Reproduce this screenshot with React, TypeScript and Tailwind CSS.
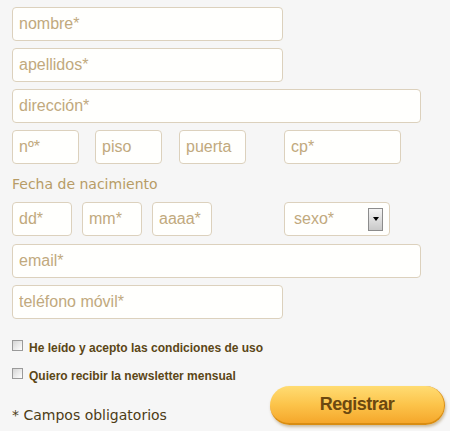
import React from 'react';

const inputCls =
  'block h-[34px] rounded-[4px] border border-[#dcd1bd] bg-[#fffffd] px-[6px] text-[16px] text-[#7a6848] outline-none placeholder:text-[#c1a97e]';

function Field({ placeholder, className }: { placeholder: string; className: string }) {
  return <input type="text" placeholder={placeholder} className={`${inputCls} ${className}`} />;
}

function Check({ label }: { label: string }) {
  return (
    <label className="flex items-start gap-[6px] text-[12px] font-bold leading-[14px] text-[#5b4617]">
      <span className="block h-[11px] w-[11px] shrink-0 border border-[#9a9a9a] bg-gradient-to-br from-[#d5d5d5] to-[#ffffff]" />
      <span className="mt-[1px]">{label}</span>
    </label>
  );
}

export default function App() {
  return (
    <div
      className="min-h-screen bg-[#f6f6f6] pl-3 pt-[7px]"
      style={{ fontFamily: '"Liberation Sans", Arial, sans-serif' }}
    >
      <div className="flex flex-col gap-[7px]">
        <Field placeholder="nombre*" className="w-[271px]" />
        <Field placeholder="apellidos*" className="w-[271px]" />
        <Field placeholder="dirección*" className="w-[409px]" />
        <div className="flex">
          <Field placeholder="nº*" className="w-[67px]" />
          <Field placeholder="piso" className="ml-[16px] w-[67px]" />
          <Field placeholder="puerta" className="ml-[17px] w-[67px]" />
          <Field placeholder="cp*" className="ml-[38px] w-[117px]" />
        </div>
      </div>

      <div className="mt-[11px] h-[27px] font-['DejaVu_Sans',sans-serif] text-[14px] leading-[18px] text-[#b79c66]">
        Fecha de nacimiento
      </div>

      <div className="flex items-center">
        <Field placeholder="dd*" className="h-[32px] w-[60px]" />
        <Field placeholder="mm*" className="ml-[10px] h-[32px] w-[60px]" />
        <Field placeholder="aaaa*" className="ml-[10px] h-[32px] w-[60px]" />
        <div className="ml-[72px] flex h-[34px] w-[106px] items-center justify-between rounded-[4px] border border-[#dcd1bd] bg-[#fffffd] pl-[9px] pr-[6px] text-[16px] text-[#c1a97e]">
          <span>sexo*</span>
          <span className="flex h-[23px] w-[15px] items-center justify-center border border-[#8c8c8c] bg-gradient-to-b from-[#f4f4f4] to-[#c9c9c9]">
            <span className="block h-0 w-0 border-x-[3px] border-t-[4px] border-x-transparent border-t-black" />
          </span>
        </div>
      </div>

      <div className="mt-[8px] flex flex-col gap-[7px]">
        <Field placeholder="email*" className="w-[409px]" />
        <Field placeholder="teléfono móvil*" className="w-[271px]" />
      </div>

      <div className="mt-[21px] flex flex-col gap-[13px]">
        <Check label="He leído y acepto las condiciones de uso" />
        <Check label="Quiero recibir la newsletter mensual" />
      </div>

      <div className="mt-[3px] flex items-end">
        <div className="mb-[1px] font-['DejaVu_Sans',sans-serif] text-[14px] leading-[17px] text-[#4d3c17]">
          * Campos obligatorios
        </div>
        <button className="ml-auto mr-[5px] h-[39px] w-[175px] rounded-full border-b-2 border-r border-[#d98d12] bg-gradient-to-b from-[#ffdc72] via-[#fcc44a] to-[#f5a72a] text-[18px] font-bold tracking-[-0.5px] text-[#6b4810] shadow-[1px_2px_3px_rgba(120,80,0,0.35)]">
          Registrar
        </button>
      </div>
    </div>
  );
}
